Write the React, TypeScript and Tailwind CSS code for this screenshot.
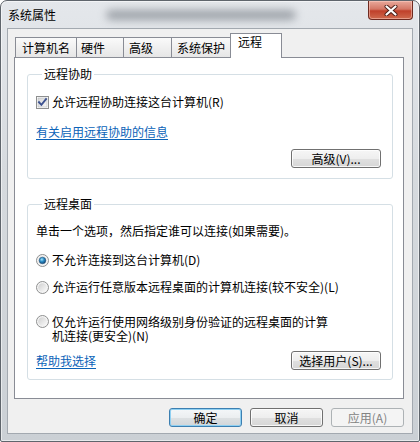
import React from "react";

function CheckBox() {
  return (
    <svg width="13" height="13" viewBox="0 0 13 13" className="shrink-0">
      <defs>
        <linearGradient id="cbg" x1="0" y1="0" x2="1" y2="1">
          <stop offset="0" stopColor="#d8d8d8" />
          <stop offset="1" stopColor="#f7f7f7" />
        </linearGradient>
      </defs>
      <rect x="0.5" y="0.5" width="12" height="12" fill="#fff" stroke="#8e8f8f" />
      <rect x="2" y="2" width="9" height="9" fill="url(#cbg)" stroke="#b5b8bd" strokeWidth="0.6" />
      <path d="M3 6.2 L5.4 8.8 L10 3.2" fill="none" stroke="#3d5290" strokeWidth="1.9" strokeLinecap="square" />
    </svg>
  );
}

function Radio({ checked }: { checked?: boolean }) {
  return (
    <svg width="13" height="13" viewBox="0 0 13 13" className="shrink-0">
      <defs>
        <linearGradient id="rbg" x1="0" y1="0" x2="1" y2="1">
          <stop offset="0" stopColor="#cfcfcf" />
          <stop offset="1" stopColor="#fafafa" />
        </linearGradient>
        <radialGradient id="rdot" cx="0.4" cy="0.35" r="0.7">
          <stop offset="0" stopColor="#a6e3fb" />
          <stop offset="0.45" stopColor="#2d8ec7" />
          <stop offset="1" stopColor="#0e3f6e" />
        </radialGradient>
      </defs>
      <circle cx="6.5" cy="6.5" r="6" fill="#f4f4f4" stroke="#8e8f8f" />
      <circle cx="6.5" cy="6.5" r="4.3" fill="url(#rbg)" />
      {checked && <circle cx="6.5" cy="6.5" r="3.3" fill="url(#rdot)" stroke="#1d4f7a" strokeWidth="0.5" />}
    </svg>
  );
}

export default function App() {
  return (
    <div className="w-[420px] h-[442px] overflow-hidden font-['Noto_Sans_CJK_SC','Noto_Sans',sans-serif] text-[12px] leading-[14px] text-black">
      <div className="w-[420px] h-[442px] flex flex-col border border-[#5f656c] rounded-t-[7px] rounded-b-[2px] bg-[linear-gradient(to_bottom,#e4e7eb_0%,#d6dade_40%,#cbd0d5_100%)] shadow-[inset_0_0_0_1px_rgba(255,255,255,0.55)]">
        {/* title bar */}
        <div className="h-[27px] flex items-start shrink-0">
          <span className="ml-[7px] mt-[7px] text-[12px] leading-[14px] text-black">系统属性</span>
          <div className="ml-[50px] mt-[9px] w-[190px] h-[10px] rounded-full bg-[#6f767e] opacity-60 blur-[4px]" />
          <div className="ml-auto mr-[6px] w-[45px] h-[19px] rounded-b-[4px] border border-t-0 border-[#6e2a20] bg-[linear-gradient(to_bottom,#e9a99b_0%,#d47766_45%,#c0402a_55%,#cf6a4e_100%)] shadow-[inset_0_0_0_1px_rgba(255,210,200,0.5)] flex items-center justify-center">
            <svg width="14" height="11" viewBox="0 0 14 11">
              <path d="M2.5 1.5 L11.5 9.5 M11.5 1.5 L2.5 9.5" stroke="#4a1d16" strokeWidth="4" strokeLinecap="round" />
              <path d="M2.5 1.5 L11.5 9.5 M11.5 1.5 L2.5 9.5" stroke="#ffffff" strokeWidth="2.2" strokeLinecap="round" />
            </svg>
          </div>
        </div>

        {/* client area */}
        <div className="ml-[6px] w-[406px] h-[406px] border border-[#a3a9b0] bg-[#f0f0f0] flex flex-col shrink-0">
          {/* tabs */}
          <div className="ml-[7px] mt-[4px] h-[24px] flex items-end">
            <div className="w-[62px] h-[20px] border border-b-0 border-[#898c95] bg-[linear-gradient(to_bottom,#fafafa,#e6e6e6)] pl-[6px] pt-[3px]">计算机名</div>
            <div className="-ml-px w-[48px] h-[20px] border border-b-0 border-[#898c95] bg-[linear-gradient(to_bottom,#fafafa,#e6e6e6)] pl-[4px] pt-[3px]">硬件</div>
            <div className="-ml-px w-[49px] h-[20px] border border-b-0 border-[#898c95] bg-[linear-gradient(to_bottom,#fafafa,#e6e6e6)] pl-[5px] pt-[3px]">高级</div>
            <div className="-ml-px w-[60px] h-[20px] border border-b-0 border-[#898c95] bg-[linear-gradient(to_bottom,#fafafa,#e6e6e6)] pl-[5px] pt-[3px]">系统保护</div>
            <div className="-ml-px w-[52px] h-[25px] -mb-px relative z-10 border border-b-0 border-[#898c95] bg-white pl-[7px] pt-[1px]">远程</div>
          </div>

          {/* panel */}
          <div className="ml-[6px] w-[390px] h-[342px] border border-[#898c95] bg-white flex flex-col shrink-0">
            {/* group 1 */}
            <fieldset className="ml-[12px] mt-[9px] w-[366px] border border-[#d5dfe5] rounded-[3px] pl-[8px] pr-[11px] pb-[10px]">
              <legend className="ml-[6px] px-[2px] leading-[14px]">远程协助</legend>
              <div className="mt-[14px] h-[14px] flex items-center gap-[3px]">
                <CheckBox />
                <span>允许远程协助连接这台计算机(R)</span>
              </div>
              <div className="mt-[16px] h-[14px]">
                <span className="text-[#0b63b8] underline underline-offset-2">有关启用远程协助的信息</span>
              </div>
              <div className="mt-[10px] flex justify-end">
                <div className="w-[90px] h-[19px] rounded-[3px] border border-[#707070] bg-[linear-gradient(to_bottom,#f6f6f6_0%,#eeeeee_50%,#e0e0e0_51%,#d6d6d6_100%)] shadow-[inset_0_0_0_1px_rgba(255,255,255,0.8)] flex items-center justify-center">高级(V)...</div>
              </div>
            </fieldset>

            {/* group 2 */}
            <fieldset className="ml-[12px] mt-[18px] w-[366px] border border-[#d5dfe5] rounded-[3px] pl-[8px] pr-[11px] pb-[9px]">
              <legend className="ml-[6px] px-[2px] leading-[14px]">远程桌面</legend>
              <div className="mt-[13px] h-[14px]">单击一个选项，然后指定谁可以连接(如果需要)。</div>
              <div className="mt-[15px] h-[14px] flex items-center gap-[3px]">
                <Radio checked />
                <span>不允许连接到这台计算机(D)</span>
              </div>
              <div className="mt-[13px] h-[14px] flex items-center gap-[3px]">
                <Radio />
                <span>允许运行任意版本远程桌面的计算机连接(较不安全)(L)</span>
              </div>
              <div className="mt-[21px] flex items-start gap-[3px]">
                <Radio />
                <span className="leading-[14px]">
                  仅允许运行使用网络级别身份验证的远程桌面的计算
                  <br />
                  机连接(更安全)(N)
                </span>
              </div>
              <div className="mt-[8px] h-[19px] flex items-center justify-between">
                <span className="text-[#0b63b8] underline underline-offset-2">帮助我选择</span>
                <div className="w-[90px] h-[19px] rounded-[3px] border border-[#707070] bg-[linear-gradient(to_bottom,#f6f6f6_0%,#eeeeee_50%,#e0e0e0_51%,#d6d6d6_100%)] shadow-[inset_0_0_0_1px_rgba(255,255,255,0.8)] flex items-center justify-center">选择用户(S)...</div>
              </div>
            </fieldset>
          </div>

          {/* dialog buttons */}
          <div className="mt-[9px] pr-[8px] flex justify-end gap-[8px]">
            <div className="w-[73px] h-[19px] rounded-[3px] border border-[#3c7fb1] bg-[linear-gradient(to_bottom,#f4f7f9_0%,#ebeef0_50%,#dde1e3_51%,#d2d6d9_100%)] shadow-[inset_0_0_0_1px_#8fd0f2] flex items-center justify-center">确定</div>
            <div className="w-[73px] h-[19px] rounded-[3px] border border-[#707070] bg-[linear-gradient(to_bottom,#f6f6f6_0%,#eeeeee_50%,#e0e0e0_51%,#d6d6d6_100%)] shadow-[inset_0_0_0_1px_rgba(255,255,255,0.8)] flex items-center justify-center">取消</div>
            <div className="w-[73px] h-[19px] rounded-[3px] border border-[#adb2b5] bg-[#f4f4f4] text-[#838383] flex items-center justify-center">应用(A)</div>
          </div>
        </div>
      </div>
    </div>
  );
}
